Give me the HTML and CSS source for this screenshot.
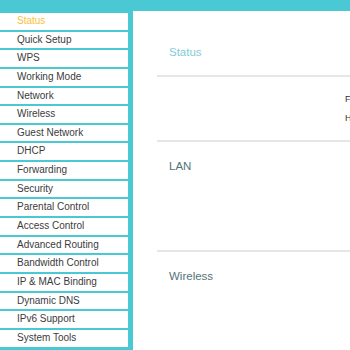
FILE: index.html
```html
<!DOCTYPE html>
<html lang="en">

<head>
    <meta charset="UTF-8">
    <meta name="viewport" content="width=device-width, initial-scale=1.0">
    <title>Status</title>
    <link rel="stylesheet" href="styles.css">
</head>

<body>
    <!-- Top Bar -->
    <div class="top-bar"></div>

    <div class="page">
        <!-- Side Menu -->
        <ul class="side-menu">
            <li class="active">Status</li>
            <li>Quick Setup</li>
            <li>WPS</li>
            <li>Working Mode</li>
            <li>Network</li>
            <li>Wireless</li>
            <li>Guest Network</li>
            <li>DHCP</li>
            <li>Forwarding</li>
            <li>Security</li>
            <li>Parental Control</li>
            <li>Access Control</li>
            <li>Advanced Routing</li>
            <li>Bandwidth Control</li>
            <li>IP &amp; MAC Binding</li>
            <li>Dynamic DNS</li>
            <li>IPv6 Support</li>
            <li>System Tools</li>
        </ul>

        <!-- Main Panel -->
        <div class="main-panel">
            <div class="section status-section">
                <h3 class="section-title highlight">Status</h3>
            </div>
            <div class="section info-section">
                <div class="info-row">Firmware Version:</div>
                <div class="info-row">Hardware Version:</div>
            </div>
            <div class="section lan-section">
                <h3 class="section-title">LAN</h3>
            </div>
            <div class="section wireless-section">
                <h3 class="section-title">Wireless</h3>
            </div>
        </div>
    </div>
</body>
</html>
```

FILE: styles.css
```css
/* General Styling */
body {
    font-family: "Liberation Sans", Arial, sans-serif;
    background-color: #4ac9d5;
    margin: 0;
    padding: 0;
    height: 350px;
    overflow: hidden;
}

.top-bar {
    height: 11px;
}

.page {
    display: flex;
    gap: 5px;
}

/* Side Menu */
.side-menu {
    list-style: none;
    margin: 0;
    padding: 2px 0 0 0;
    width: 128px;
    flex-shrink: 0;
    display: flex;
    flex-direction: column;
    gap: 2px;
}

.side-menu li {
    background-color: #fff;
    height: 16.65px;
    line-height: 16.65px;
    padding-left: 17px;
    font-size: 10px;
    color: #3c3c3c;
    white-space: nowrap;
}

.side-menu li.active {
    color: #f7c23a;
}

/* Main Panel */
.main-panel {
    flex: 1;
    background-color: #fff;
    height: 339px;
    padding: 32px 0 0 24px;
    box-sizing: border-box;
    overflow: hidden;
}

.section {
    border-bottom: 2px solid #e6e6e6;
}

.section-title {
    margin: 0;
    padding-left: 12px;
    font-size: 11.5px;
    font-weight: normal;
    line-height: 18px;
    color: #557379;
}

.section-title.highlight {
    color: #82ccd7;
}

.status-section {
    padding-bottom: 14px;
}

.info-section {
    padding: 13px 0 12px 188px;
}

.info-row {
    font-size: 9px;
    line-height: 19px;
    color: #333;
    white-space: nowrap;
}

.lan-section {
    height: 93px;
    padding-top: 15px;
}

.wireless-section {
    border-bottom: none;
    padding-top: 15px;
}
```
